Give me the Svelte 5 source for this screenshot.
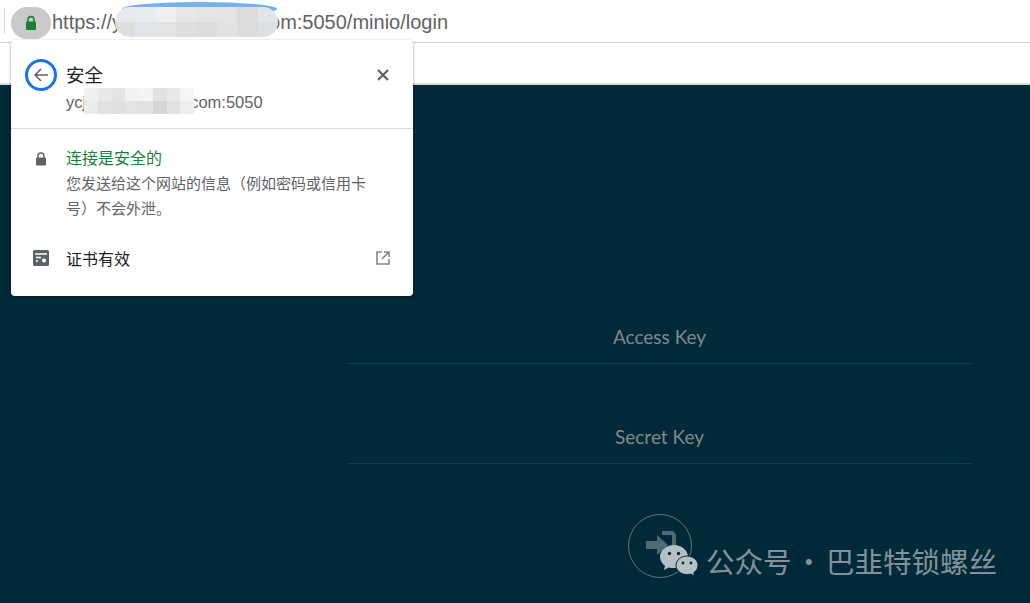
<script>
  const urlMosaic = [
    '#e9e9e9', '#e9ecef', '#eff1f1', '#e7e7e7', '#e6e5e5', '#e4e4e4', '#dbdbdc', '#e3e5e9',
    '#dedede', '#e0e4e8', '#e3e3e3', '#dfdede', '#dcdcdc', '#e2e2e2', '#dcdcdd', '#dcdfe3'
  ];
  const hostMosaic = [
    '#f0f0f0', '#e8e8e8', '#e4e4e4', '#f2f2f2', '#f4f4f4', '#e3e2e0', '#e8e8e8', '#f5f5f5',
    '#ececec', '#e2e2e2', '#dfdfdf', '#e3e3e3', '#e2e2e2', '#d7d6d3', '#e2e2e2', '#ededed'
  ];
</script>

<div class="page">
  <header class="toolbar">
    <span class="divider"></span>
    <span class="lock-chip">
      <svg width="14" height="16" viewBox="0 0 14 16">
        <path d="M4 7V4.600a3 3 0 0 1 6 0V7" fill="none" stroke="#188038" stroke-width="1.600" />
        <rect x="2" y="6.400" width="10" height="8.600" rx="1" fill="#188038" />
      </svg>
    </span>
    <div class="url">
      <span>https://y</span><span class="url-gap"></span><span>om:5050/minio/login</span>
      <span class="blue-smear"></span>
      <span class="mosaic url-mosaic">
        {#each urlMosaic as c}
          <i style="background: {c}"></i>
        {/each}
      </span>
    </div>
  </header>
  <div class="bookmarks"></div>

  <main class="login">
    <div class="form">
      <div class="field">Access Key</div>
      <div class="field">Secret Key</div>
      <div class="submit">
        <svg width="34" height="30" viewBox="0 0 34 30">
          <path d="M1 11h11V5l11 10-11 10v-6H1z" fill="#4f6a73" />
          <path d="M17 3h9a3 3 0 0 1 3 3v18" fill="none" stroke="#4f6a73" stroke-width="4" />
        </svg>
      </div>
    </div>
  </main>

  <section class="popover">
    <div class="pop-head">
      <span class="back">
        <svg width="16" height="16" viewBox="0 0 16 16">
          <path d="M15 8H2M8 2 2 8l6 6" fill="none" stroke="#5f6368" stroke-width="1.500" />
        </svg>
      </span>
      <div class="titles">
        <div class="title">安全</div>
        <div class="host">
          <span>ycj</span><span class="host-gap"></span><span>com:5050</span>
          <span class="mosaic host-mosaic">
            {#each hostMosaic as c}
              <i style="background: {c}"></i>
            {/each}
          </span>
        </div>
      </div>
      <svg class="close" width="12" height="12" viewBox="0 0 12 12">
        <path d="M1 1l10 10M11 1 1 11" stroke="#5f6368" stroke-width="2.200" />
      </svg>
    </div>
    <div class="pop-body">
      <div class="row">
        <svg class="row-icon" width="12" height="14" viewBox="0 0 12 14">
          <path d="M3 6V4a3 3 0 0 1 6 0v2" fill="none" stroke="#5f6368" stroke-width="1.400" />
          <rect x="1" y="5.500" width="10" height="8" rx="1.200" fill="#5f6368" />
        </svg>
        <div class="row-text">
          <div class="secure">连接是安全的</div>
          <p>您发送给这个网站的信息（例如密码或信用卡号）不会外泄。</p>
        </div>
      </div>
      <div class="row cert">
        <svg class="row-icon" width="16" height="16" viewBox="0 0 16 16">
          <rect width="16" height="16" rx="1.500" fill="#5f6368" />
          <path d="M2 4h12M3 7.500h5M3 11h2" stroke="#fff" stroke-width="1.300" />
          <circle cx="11" cy="10.500" r="2" fill="#fff" />
        </svg>
        <span class="cert-label">证书有效</span>
        <svg class="ext" width="14" height="14" viewBox="0 0 14 14">
          <path d="M6 1H1v12h12V8M8 1h5v5M13 1 6 8" fill="none" stroke="#80868b" stroke-width="1.600" />
        </svg>
      </div>
    </div>
  </section>

  <div class="watermark">
    <svg width="38" height="32" viewBox="0 0 38 32">
      <path d="M14 0C6.300 0 0 5.200 0 11.700c0 3.600 2 6.800 5 9l-1 4.300 4.800-2.600c1.500.4 3.200.7 5.200.7 7.700 0 14-5.200 14-11.400S21.700 0 14 0z" fill="#b4c0c4" />
      <path d="M27 11c-6 0-11 4.100-11 9.300s5 9.300 11 9.300c1.300 0 2.500-.2 3.700-.5l3.800 2.100-.8-3.400c2.600-1.800 4.300-4.500 4.300-7.500 0-5.200-5-9.300-11-9.300z" fill="#b4c0c4" stroke="#002a37" stroke-width="1" />
      <circle cx="9.500" cy="8.500" r="1.700" fill="#002a37" />
      <circle cx="18.500" cy="8.500" r="1.700" fill="#002a37" />
      <circle cx="23" cy="18" r="1.400" fill="#002a37" />
      <circle cx="31" cy="18" r="1.400" fill="#002a37" />
    </svg>
    <span>公众号<span class="dot">·</span>巴韭特锁螺丝</span>
  </div>
</div>

<style>
  :global(body) {
    margin: 0;
    background: #002a37;
  }

  .page {
    position: relative;
    width: 1030px;
    height: 603px;
    overflow: hidden;
    background: #012a39;
    font-family: "Liberation Sans", "Noto Sans CJK SC", sans-serif;
  }

  .toolbar {
    display: flex;
    align-items: center;
    height: 42px;
    background: #fff;
    border-bottom: 1px solid #d2d2d2;
  }

  .divider {
    width: 1px;
    height: 26px;
    margin: 0 6px 0 4px;
    background: #d8d8d8;
  }

  .lock-chip {
    display: flex;
    align-items: center;
    justify-content: center;
    width: 40px;
    height: 32px;
    margin-top: 3px;
    border-radius: 16px;
    background: #c9c9c9;
  }

  .url {
    position: relative;
    display: flex;
    margin: 2px 0 0 1px;
    font-size: 20px;
    color: #5f6368;
  }

  .url-gap {
    width: 147px;
  }

  .blue-smear {
    position: absolute;
    left: 70px;
    top: -9px;
    width: 155px;
    height: 14px;
    border-radius: 50%;
    background: #74b4ea;
  }

  .mosaic {
    position: absolute;
    display: grid;
    grid-template-columns: repeat(8, 1fr);
    grid-auto-rows: 1fr;
    overflow: hidden;
    filter: blur(0.6px);
  }

  .url-mosaic {
    left: 63px;
    top: -4px;
    width: 163px;
    height: 30px;
    border-radius: 15px;
  }

  .bookmarks {
    height: 40px;
    background: #fff;
    border-bottom: 2px solid #d9d9d9;
  }

  .login {
    display: flex;
    justify-content: flex-end;
    padding-right: 58px;
  }

  .form {
    width: 625px;
  }

  .field {
    height: 100px;
    box-sizing: border-box;
    border-bottom: 1px solid #10404f;
    display: flex;
    align-items: flex-end;
    justify-content: center;
    padding-bottom: 15px;
    font-family: Lato, sans-serif;
    font-size: 19px;
    line-height: 22px;
    color: #82898a;
  }

  .field:first-child {
    height: 80px;
    margin-top: 199px;
  }

  .submit {
    display: flex;
    align-items: center;
    justify-content: center;
    width: 62px;
    height: 62px;
    margin: 50px auto 0;
    border: 1px solid #5c757d;
    border-radius: 50%;
  }

  .submit svg {
    margin: -3px 0 0 5px;
  }

  .popover {
    position: absolute;
    left: 11px;
    top: 40px;
    width: 402px;
    height: 256px;
    border-radius: 4px;
    background: #fff;
    box-shadow: 0 1px 3px rgba(0, 0, 0, 0.4);
  }

  .pop-head {
    display: flex;
    height: 89px;
    box-sizing: border-box;
    padding: 20px 24px 0 14px;
    border-bottom: 1px solid #dadce0;
  }

  .back {
    display: flex;
    align-items: center;
    justify-content: center;
    flex: none;
    width: 26px;
    height: 26px;
    margin: -1px 9px 0 0;
    border: 3px solid #1a73e8;
    border-radius: 50%;
  }

  .titles {
    flex: 1;
  }

  .title {
    font-size: 18.500px;
    line-height: 30px;
    padding-top: 1px;
    color: #202124;
  }

  .host {
    position: relative;
    display: flex;
    font-size: 16.500px;
    line-height: 20px;
    margin-top: 1px;
    color: #5f6368;
  }

  .host-gap {
    width: 104px;
  }

  .host-mosaic {
    left: 18px;
    top: -4px;
    width: 110px;
    height: 26px;
  }

  .close {
    margin-top: 9px;
  }

  .pop-body {
    padding: 20px 23px 0;
  }

  .row {
    display: flex;
    align-items: flex-start;
  }

  .row-icon {
    flex: none;
    margin: 3px 19px 0 1px;
  }

  .row-text {
    width: 305px;
  }

  .secure {
    font-size: 16px;
    line-height: 20px;
    color: #188038;
  }

  .row-text p {
    margin: 2px 0 0;
    font-size: 15px;
    line-height: 25px;
    color: #5f6368;
  }

  .cert {
    align-items: center;
    margin-top: 25px;
  }

  .cert .row-icon {
    margin: 0 17px 0 -1px;
  }

  .cert-label {
    flex: 1;
    font-size: 16px;
    color: #202124;
  }

  .watermark {
    position: absolute;
    left: 660px;
    top: 544px;
    display: flex;
    align-items: center;
    gap: 8px;
    font-family: "Noto Sans CJK SC", sans-serif;
    font-size: 28.500px;
    line-height: 34px;
    color: #829298;
  }

  .dot {
    margin: 0 3px;
  }
</style>
